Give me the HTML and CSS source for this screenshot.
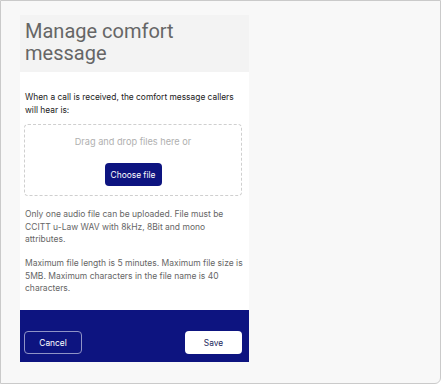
FILE: index.html
```html
<!DOCTYPE html>
<html lang="en">
<head>
  <meta charset="UTF-8">
  <meta name="viewport" content="width=device-width, initial-scale=1.0">
  <title>Manage comfort message</title>
  <link rel="stylesheet" href="styles.css">
</head>
<body>
  <div class="frame">
    <div class="panel">
      <div class="panel-header">
        <h1>Manage comfort message</h1>
      </div>

      <div class="panel-body">
        <p class="intro">When a call is received, the comfort message callers will hear is:</p>

        <div class="dropzone">
          <p class="drop-text">Drag and drop files here or</p>
          <button class="btn-choose">Choose file</button>
        </div>

        <p class="note">Only one audio file can be uploaded. File must be CCITT u-Law WAV with 8kHz, 8Bit and mono attributes.</p>
        <p class="note">Maximum file length is 5 minutes. Maximum file size is 5MB. Maximum characters in the file name is 40 characters.</p>
      </div>

      <div class="panel-footer">
        <button class="btn-cancel">Cancel</button>
        <button class="btn-save">Save</button>
      </div>
    </div>
  </div>
</body>
</html>
```

FILE: styles.css
```css
body {
  margin: 0;
  padding: 0;
  background: #ffffff;
  font-family: Inter, Roboto, sans-serif;
}
.frame {
  width: 441px;
  height: 384px;
  box-sizing: border-box;
  border: 1px solid #cacaca;
  border-radius: 0 0 6px 0;
  background: #f8f8f8;
  padding: 14px 0 0 19px;
}
.panel {
  width: 229px;
  display: flex;
  flex-direction: column;
}
.panel-header {
  height: 57px;
  box-sizing: border-box;
  background: #f3f3f3;
  padding: 5px 5px 0 5px;
}
h1 {
  margin: 0;
  font-family: Roboto, sans-serif;
  font-size: 20px;
  line-height: 22px;
  font-weight: 400;
  color: #666666;
}
.panel-body {
  height: 238px;
  box-sizing: border-box;
  background: #ffffff;
  padding: 19px 4px 0 5px;
}
.intro {
  margin: 0;
  font-size: 8.4px;
  line-height: 13px;
  color: #222222;
}
.dropzone {
  margin: 7px 3px 0 -1px;
  height: 72px;
  box-sizing: border-box;
  border: 1px dashed #cfcfcf;
  border-radius: 4px;
  display: flex;
  flex-direction: column;
  align-items: center;
  padding-top: 10px;
}
.drop-text {
  margin: 0;
  font-size: 9.2px;
  line-height: 14px;
  color: #b0b0b0;
}
.btn-choose {
  margin-top: 14px;
  width: 57px;
  height: 23px;
  padding: 0;
  border: none;
  border-radius: 4px;
  background: #0d1480;
  color: #ffffff;
  font-family: Inter, sans-serif;
  font-size: 8.4px;
}
.note {
  margin: 12px 0 0 0;
  font-size: 8.5px;
  line-height: 12.5px;
  color: #666666;
}
.note + .note {
  margin-top: 11.5px;
}
.panel-footer {
  height: 52px;
  box-sizing: border-box;
  background: #0d1480;
  display: flex;
  justify-content: space-between;
  align-items: flex-end;
  padding: 0 7px 8px 4px;
}
.btn-cancel, .btn-save {
  width: 58px;
  height: 23px;
  padding: 0;
  border-radius: 4px;
  font-family: Inter, sans-serif;
  font-size: 8.4px;
}
.btn-cancel {
  background: transparent;
  border: 1px solid #8f93c6;
  color: #ffffff;
}
.btn-save {
  width: 57px;
  background: #ffffff;
  border: none;
  color: #1a1f5c;
}
```
